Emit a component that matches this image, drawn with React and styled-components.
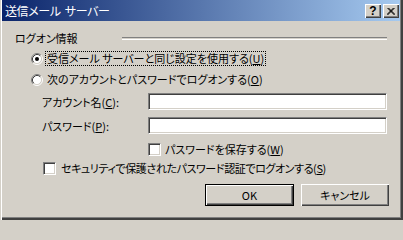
import React from "react";
import styled, { createGlobalStyle } from "styled-components";

const GlobalStyle = createGlobalStyle`
  html, body {
    margin: 0;
    padding: 0;
    background: #d4d0c8;
  }
  body {
    font-family: "Noto Sans CJK JP", "Noto Sans", sans-serif;
    font-size: 11px;
    font-feature-settings: "palt";
    color: #000;
  }
`;

const Window = styled.div`
  width: 403px;
  height: 220px;
  box-sizing: border-box;
  background: #d4d0c8;
  padding: 0 3px 3px 2px;
  box-shadow: inset 1px 0 #d4d0c8, inset 2px 0 #fff, inset -1px -1px #404040,
    inset -2px -2px #404040, inset -3px -3px #808080;
  display: flex;
  flex-direction: column;
`;

const TitleBar = styled.div`
  height: 21px;
  flex: none;
  display: flex;
  align-items: center;
  justify-content: space-between;
  padding: 0 1px 0 3px;
  background: linear-gradient(to right, #0a246a, #a6caf0);
`;

const Title = styled.span`
  color: #fff;
  font-size: 12px;
  line-height: 21px;
  letter-spacing: -0.4px;
  word-spacing: 2px;
`;

const CaptionButtons = styled.div`
  display: flex;
  gap: 2px;
  margin-top: 1px;
`;

const CaptionButton = styled.div`
  width: 16px;
  height: 14px;
  box-sizing: border-box;
  background: #d4d0c8;
  box-shadow: inset 1px 1px #fff, inset -1px -1px #404040,
    inset -2px -2px #808080;
  display: flex;
  align-items: center;
  justify-content: center;
  font-family: "Liberation Sans", Arial, sans-serif;
  font-weight: bold;
  font-size: 12px;
  line-height: 14px;
`;

const Body = styled.div`
  display: flex;
  flex-direction: column;
  padding: 0 0 0 13px;
`;

const GroupHeader = styled.div`
  display: flex;
  align-items: center;
  height: 14px;
  margin-top: 10px;
  padding-right: 13px;
`;

const GroupLine = styled.div`
  flex: 1;
  margin-left: 44px;
  height: 1px;
  border-top: 1px solid #808080;
  border-bottom: 1px solid #fff;
`;

const Row = styled.div`
  display: flex;
  align-items: center;
  height: ${(p) => p.$h || 15}px;
  margin-top: ${(p) => p.$top || 0}px;
  padding-left: ${(p) => p.$indent || 0}px;
`;

const Label = styled.span`
  line-height: 13px;
  white-space: nowrap;
  margin-left: ${(p) => p.$gap || 0}px;
  padding: 0 1px;
  letter-spacing: ${(p) => p.$tight || 0}px;
  outline: ${(p) => (p.$focus ? "1px dotted #000" : "none")};
`;

const FieldLabel = styled.span`
  width: 106px;
  flex: none;
  white-space: nowrap;
`;

const TextBox = styled.div`
  width: 239px;
  height: 17px;
  box-sizing: border-box;
  background: #fff;
  border-top: 1px solid #808080;
  border-left: 1px solid #808080;
  border-right: 1px solid #fff;
  border-bottom: 1px solid #fff;
  box-shadow: inset 1px 1px #404040, inset -1px -1px #d4d0c8;
`;

const CheckBox = styled.span`
  width: 13px;
  height: 13px;
  flex: none;
  box-sizing: border-box;
  background: #fff;
  border-top: 1px solid #808080;
  border-left: 1px solid #808080;
  border-right: 1px solid #fff;
  border-bottom: 1px solid #fff;
  box-shadow: inset 1px 1px #404040, inset -1px -1px #d4d0c8;
`;

const ButtonRow = styled.div`
  display: flex;
  justify-content: flex-end;
  gap: 7px;
  margin-top: 9px;
  padding-right: 11px;
`;

const Button = styled.div`
  width: ${(p) => p.$w}px;
  height: 22px;
  box-sizing: border-box;
  display: flex;
  align-items: center;
  justify-content: center;
  background: #d4d0c8;
  border: ${(p) => (p.$default ? "1px solid #000" : "none")};
  box-shadow: inset 1px 1px #fff, inset -1px -1px #404040,
    inset -2px -2px #808080;
`;

const Radio = ({ checked }) => (
  <svg width="12" height="12" viewBox="0 0 12 12" style={{ flex: "none" }}>
    <circle cx="6" cy="6" r="4.5" fill="#fff" />
    <path d="M2.11 9.89 A5.5 5.5 0 0 1 9.89 2.11" stroke="#808080" fill="none" />
    <path d="M9.89 2.11 A5.5 5.5 0 0 1 2.11 9.89" stroke="#fff" fill="none" />
    <path d="M2.82 9.18 A4.5 4.5 0 0 1 9.18 2.82" stroke="#404040" fill="none" />
    <path d="M9.18 2.82 A4.5 4.5 0 0 1 2.82 9.18" stroke="#d4d0c8" fill="none" />
    {checked && <circle cx="6" cy="6" r="2" fill="#000" />}
  </svg>
);

const CloseGlyph = () => (
  <svg width="8" height="7" viewBox="0 0 8 7">
    <path d="M0.5 0 L7.5 7 M1.5 0 L8 6.5 M7.5 0 L0.5 7 M6.5 0 L0 6.5" stroke="#000" strokeWidth="1" />
  </svg>
);

export default function App() {
  return (
    <>
      <GlobalStyle />
      <Window>
        <TitleBar>
          <Title>送信メール サーバー</Title>
          <CaptionButtons>
            <CaptionButton>?</CaptionButton>
            <CaptionButton>
              <CloseGlyph />
            </CaptionButton>
          </CaptionButtons>
        </TitleBar>
        <Body>
          <GroupHeader>
            <span>ログオン情報</span>
            <GroupLine />
          </GroupHeader>
          <Row $top={6} $indent={16}>
            <Radio checked />
            <Label $gap={3} $focus>
              受信メール サーバーと同じ設定を使用する(<u>U</u>)
            </Label>
          </Row>
          <Row $top={6} $indent={16}>
            <Radio />
            <Label $gap={3}>
              次のアカウントとパスワードでログオンする(<u>O</u>)
            </Label>
          </Row>
          <Row $top={6} $h={17} $indent={27}>
            <FieldLabel>
              アカウント名(<u>C</u>):
            </FieldLabel>
            <TextBox />
          </Row>
          <Row $top={7} $h={17} $indent={27}>
            <FieldLabel>
              パスワード(<u>P</u>):
            </FieldLabel>
            <TextBox />
          </Row>
          <Row $top={9} $h={13} $indent={133}>
            <CheckBox />
            <Label $gap={3}>
              パスワードを保存する(<u>W</u>)
            </Label>
          </Row>
          <Row $top={6} $h={13} $indent={28}>
            <CheckBox />
            <Label $gap={4} $tight={-0.4}>
              セキュリティで保護されたパスワード認証でログオンする(<u>S</u>)
            </Label>
          </Row>
          <ButtonRow>
            <Button $w={89} $default>
              OK
            </Button>
            <Button $w={88}>キャンセル</Button>
          </ButtonRow>
        </Body>
      </Window>
    </>
  );
}
